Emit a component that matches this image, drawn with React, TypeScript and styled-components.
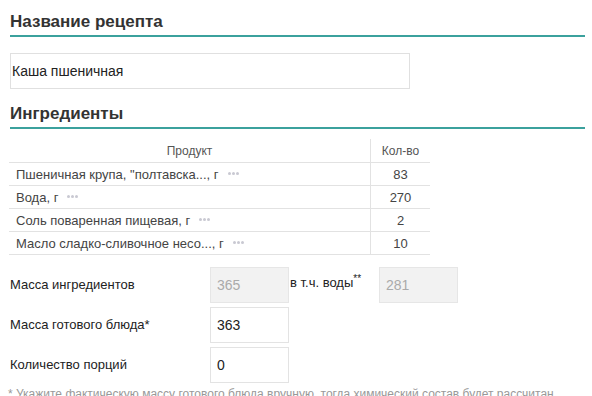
import React from 'react';
import styled, { createGlobalStyle } from 'styled-components';

const GlobalStyle = createGlobalStyle`
  body {
    margin: 0;
    background: #fff;
    font-family: "Liberation Sans", Arial, sans-serif;
    color: #333;
  }
`;

const Page = styled.div`
  width: 592px;
  height: 396px;
  overflow: hidden;
  padding: 11px 7px 0 10px;
  box-sizing: border-box;
`;

const SectionTitle = styled.h2`
  margin: 0;
  font-size: 17px;
  line-height: 22px;
  font-weight: bold;
  color: #333;
  padding-bottom: 2px;
  border-bottom: 2px solid #3ba19d;
`;

const NameInput = styled.div`
  margin: 16px 0 14px;
  width: 400px;
  height: 36px;
  box-sizing: border-box;
  border: 1px solid #e0e0e0;
  display: flex;
  align-items: center;
  padding: 0 1px;
  font-size: 14px;
  color: #222;
`;

const Table = styled.table`
  margin: 10px 0 0 -1px;
  width: 421px;
  border-collapse: collapse;
  font-size: 13px;
  color: #444;
`;

const Th = styled.th<{ $narrow?: boolean }>`
  font-weight: normal;
  font-size: 12px;
  color: #555;
  height: 23px;
  padding: 0;
  text-align: center;
  border-bottom: 1px solid #e2e2e2;
  width: ${p => (p.$narrow ? '59px' : 'auto')};
  border-left: ${p => (p.$narrow ? '1px solid #e2e2e2' : 'none')};
`;

const Td = styled.td<{ $qty?: boolean }>`
  height: 22px;
  padding: 0 0 0 ${p => (p.$qty ? '0' : '7px')};
  text-align: ${p => (p.$qty ? 'center' : 'left')};
  border-bottom: 1px solid #e2e2e2;
  border-left: ${p => (p.$qty ? '1px solid #e2e2e2' : 'none')};
  white-space: nowrap;
`;

const More = styled.span`
  display: inline-flex;
  gap: 1px;
  margin-left: 9px;
  vertical-align: 4px;

  i {
    width: 3px;
    height: 3px;
    border-radius: 50%;
    background: #c9c9d2;
  }
`;

const Form = styled.div`
  margin-top: 12px;
  display: flex;
  flex-direction: column;
  gap: 4px;
`;

const FormRow = styled.div`
  display: flex;
  align-items: center;
`;

const Label = styled.div`
  width: 200px;
  font-size: 13px;
  color: #222;
  margin-top: -2px;
`;

const Field = styled.div<{ $disabled?: boolean }>`
  width: 79px;
  height: 36px;
  box-sizing: border-box;
  border: 1px solid ${p => (p.$disabled ? '#e6e6e6' : '#e3e3e3')};
  background: ${p => (p.$disabled ? '#f2f2f2' : '#fff')};
  color: ${p => (p.$disabled ? '#aaa' : '#222')};
  font-size: 14px;
  display: flex;
  align-items: center;
  padding-left: 6px;
`;

const SubLabel = styled.div`
  width: 89px;
  padding-left: 1px;
  font-size: 13px;
  color: #222;
  margin-top: -6px;

  sup {
    font-size: 10px;
  }
`;

const Note = styled.div`
  margin: 4px 0 0 -2px;
  font-size: 12px;
  color: #999;
  white-space: nowrap;
`;

const ingredients = [
  { name: 'Пшеничная крупа, "полтавска..., г', qty: 83 },
  { name: 'Вода, г', qty: 270 },
  { name: 'Соль поваренная пищевая, г', qty: 2 },
  { name: 'Масло сладко-сливочное несо..., г', qty: 10 },
];

const App: React.FC = () => {
  return (
    <Page>
      <GlobalStyle />
      <SectionTitle>Название рецепта</SectionTitle>
      <NameInput>Каша пшеничная</NameInput>
      <SectionTitle>Ингредиенты</SectionTitle>
      <Table>
        <thead>
          <tr>
            <Th>Продукт</Th>
            <Th $narrow>Кол-во</Th>
          </tr>
        </thead>
        <tbody>
          {ingredients.map(item => (
            <tr key={item.name}>
              <Td>
                {item.name}
                <More>
                  <i />
                  <i />
                  <i />
                </More>
              </Td>
              <Td $qty>{item.qty}</Td>
            </tr>
          ))}
        </tbody>
      </Table>
      <Form>
        <FormRow>
          <Label>Масса ингредиентов</Label>
          <Field $disabled>365</Field>
          <SubLabel>
            в т.ч. воды<sup>**</sup>
          </SubLabel>
          <Field $disabled>281</Field>
        </FormRow>
        <FormRow>
          <Label>Масса готового блюда*</Label>
          <Field>363</Field>
        </FormRow>
        <FormRow>
          <Label>Количество порций</Label>
          <Field>0</Field>
        </FormRow>
      </Form>
      <Note>
        * Укажите фактическую массу готового блюда вручную, тогда химический состав будет рассчитан
      </Note>
    </Page>
  );
};

export default App;
